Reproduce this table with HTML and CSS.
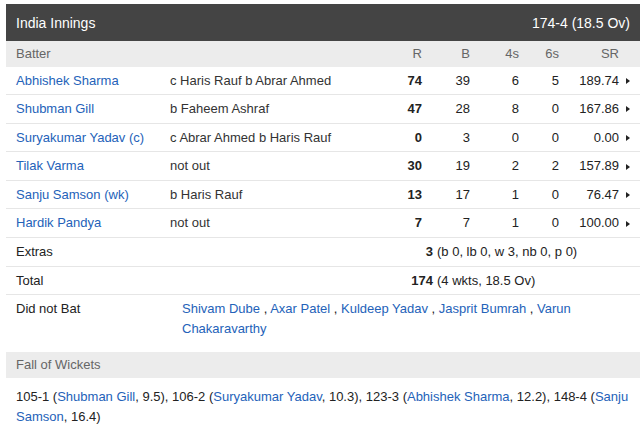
FILE: index.html
```html
<!DOCTYPE html>
<html>
<head>
<meta charset="utf-8">
<link rel="stylesheet" href="styles.css">
</head>
<body>
<div class="card">
  <div class="title">
    <span>India Innings</span>
    <span>174-4 (18.5 Ov)</span>
  </div>
  <div class="row head">
    <span>Batter</span><span></span>
    <span class="num">R</span><span class="num">B</span><span class="num">4s</span><span class="num">6s</span><span class="num">SR</span><span></span>
  </div>
  <div class="row">
    <a class="name">Abhishek Sharma</a><span class="dis">c Haris Rauf b Abrar Ahmed</span>
    <span class="num b">74</span><span class="num">39</span><span class="num">6</span><span class="num">5</span><span class="num">189.74</span><span class="arr"><i></i></span>
  </div>
  <div class="row">
    <a class="name">Shubman Gill</a><span class="dis">b Faheem Ashraf</span>
    <span class="num b">47</span><span class="num">28</span><span class="num">8</span><span class="num">0</span><span class="num">167.86</span><span class="arr"><i></i></span>
  </div>
  <div class="row">
    <a class="name">Suryakumar Yadav (c)</a><span class="dis">c Abrar Ahmed b Haris Rauf</span>
    <span class="num b">0</span><span class="num">3</span><span class="num">0</span><span class="num">0</span><span class="num">0.00</span><span class="arr"><i></i></span>
  </div>
  <div class="row">
    <a class="name">Tilak Varma</a><span class="dis">not out</span>
    <span class="num b">30</span><span class="num">19</span><span class="num">2</span><span class="num">2</span><span class="num">157.89</span><span class="arr"><i></i></span>
  </div>
  <div class="row">
    <a class="name">Sanju Samson (wk)</a><span class="dis">b Haris Rauf</span>
    <span class="num b">13</span><span class="num">17</span><span class="num">1</span><span class="num">0</span><span class="num">76.47</span><span class="arr"><i></i></span>
  </div>
  <div class="row">
    <a class="name">Hardik Pandya</a><span class="dis">not out</span>
    <span class="num b">7</span><span class="num">7</span><span class="num">1</span><span class="num">0</span><span class="num">100.00</span><span class="arr"><i></i></span>
  </div>
  <div class="row sum">
    <span>Extras</span><span class="num b">3</span><span class="detail">(b 0, lb 0, w 3, nb 0, p 0)</span>
  </div>
  <div class="row sum">
    <span>Total</span><span class="num b">174</span><span class="detail">(4 wkts, 18.5 Ov)</span>
  </div>
  <div class="row dnb">
    <span>Did not Bat</span>
    <span><a>Shivam Dube</a> , <a>Axar Patel</a> , <a>Kuldeep Yadav</a> , <a>Jasprit Bumrah</a> , <a>Varun Chakaravarthy</a></span>
  </div>
  <div class="sub">Fall of Wickets</div>
  <p class="fow">105-1 (<a>Shubman Gill</a>, 9.5), 106-2 (<a>Suryakumar Yadav</a>, 10.3), 123-3 (<a>Abhishek Sharma</a>, 12.2), 148-4 (<a>Sanju Samson</a>, 16.4)</p>
</div>
</body>
</html>
```

FILE: styles.css
```css
html, body {
  margin: 0;
  padding: 0;
  background: #fff;
}
body {
  font-family: "Liberation Sans", Arial, sans-serif;
  font-size: 13px;
  color: #222;
}
.card {
  margin: 4px 3px 0 6px;
  width: 634px;
}
a {
  color: #2462b9;
  text-decoration: none;
}
.title {
  display: flex;
  justify-content: space-between;
  align-items: center;
  height: 37px;
  padding: 0 10px;
  background: #444;
  color: #fff;
  font-size: 14px;
}
.row {
  display: grid;
  grid-template-columns: 154px 212px 40px 48px 49px 40px 60px 21px;
  padding: 5px 0 4px 10px;
  line-height: 18.57px;
  border-bottom: 1px solid #e6e6e6;
  align-items: center;
}
.row.head {
  background: #ececec;
  color: #666;
  padding: 4px 0 3px 10px;
  border-bottom: 0;
}
.num {
  text-align: right;
}
.b {
  font-weight: bold;
}
.dis {
  color: #333;
}
.arr {
  display: flex;
  align-items: center;
  padding-left: 7px;
}
.arr i {
  width: 0;
  height: 0;
  border-left: 4px solid #222;
  border-top: 3.5px solid transparent;
  border-bottom: 3.5px solid transparent;
}
.row.sum {
  grid-template-columns: 366px 51px 1fr;
}
.detail {
  padding-left: 4px;
}
.row.dnb {
  grid-template-columns: 166px 1fr;
  line-height: 20px;
  padding: 4px 10px 4px 10px;
  border-bottom: 0;
  align-items: start;
}
.sub {
  margin-top: 9px;
  background: #ececec;
  color: #666;
  height: 26px;
  line-height: 26px;
  padding: 0 10px;
}
.fow {
  margin: 0;
  padding: 9px 10px 0 10px;
  line-height: 20px;
}
```
